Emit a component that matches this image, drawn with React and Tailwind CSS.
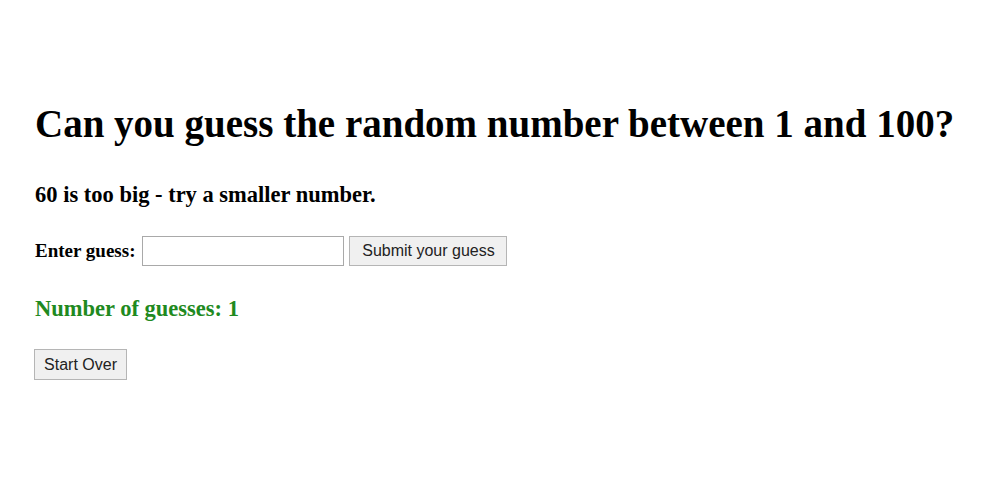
export default function App() {
  return (
    <div className="w-[1000px] h-[500px] bg-white pl-[35px] pt-[100px] text-black" style={{ fontFamily: '"Liberation Serif", serif' }}>
      <h1 className="text-[39px] font-bold leading-[48px] m-0">Can you guess the random number between 1 and 100?</h1>
      <p className="mt-[34px] text-[22.5px] font-bold leading-[26px]">60 is too big - try a smaller number.</p>
      <div className="mt-[28px] flex items-center">
        <span className="text-[19px] font-bold">Enter guess:</span>
        <input className="ml-[7px] w-[202px] h-[30px] border border-[#a9a9a9] bg-white" />
        <button className="ml-[5px] w-[158px] h-[30px] border border-[#b5b5b5] bg-[#f0f0f0] text-[16px] text-[#222]" style={{ fontFamily: '"Liberation Sans", sans-serif' }}>Submit your guess</button>
      </div>
      <p className="mt-[30px] text-[22.5px] font-bold text-[#1f8a1f] leading-[26px]">Number of guesses: 1</p>
      <button className="mt-[27px] -ml-[1px] w-[93px] h-[31px] border border-[#b5b5b5] bg-[#f0f0f0] text-[16px] text-[#222]" style={{ fontFamily: '"Liberation Sans", sans-serif' }}>Start Over</button>
    </div>
  );
}
